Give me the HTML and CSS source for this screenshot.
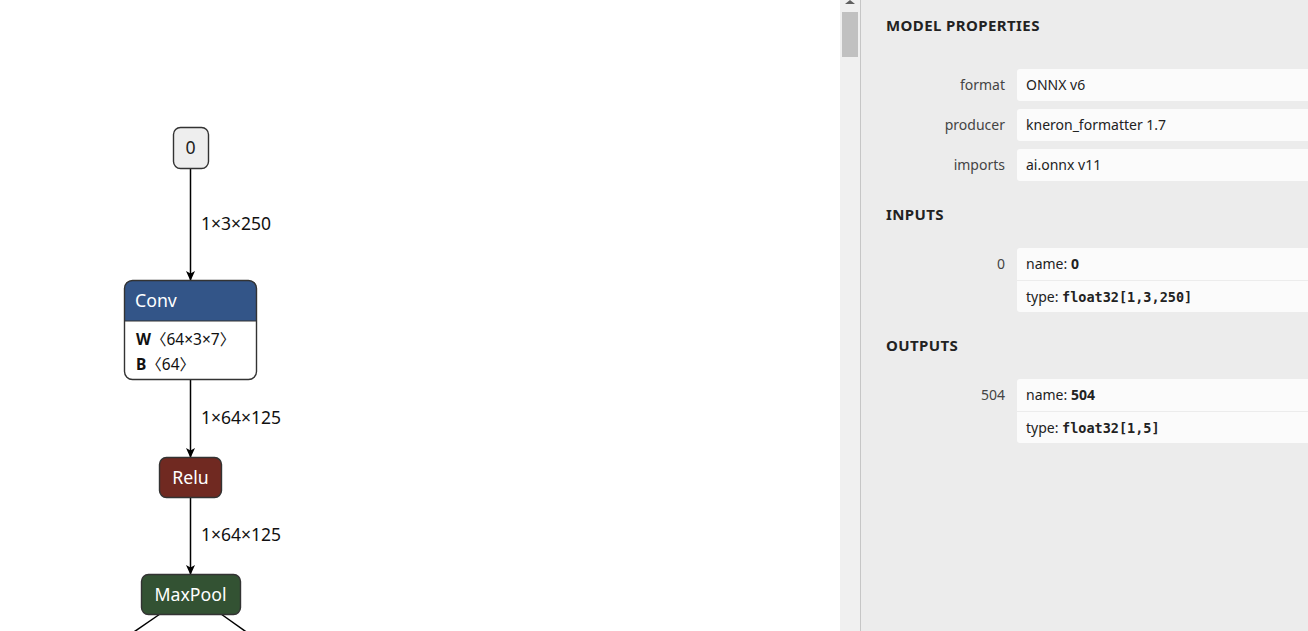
FILE: index.html
```html
<!DOCTYPE html>
<html lang="en">
<head>
    <meta charset="UTF-8">
    <title>Netron - model properties</title>
    <link rel="stylesheet" href="styles.css">
</head>
<body>
    <div class="graph">
        <svg class="graph-canvas" width="840" height="631" viewBox="0 0 840 631">
            <defs>
                <marker id="arrow" viewBox="0 0 10 10" refX="9" refY="5" markerWidth="10" markerHeight="10" orient="auto" markerUnits="userSpaceOnUse">
                    <path d="M0,0.5 L10,5 L0,9.5 L2.5,5 Z" fill="#000"/>
                </marker>
            </defs>

            <!-- edges -->
            <line class="edge" x1="190.5" y1="168" x2="190.5" y2="280" marker-end="url(#arrow)"/>
            <line class="edge" x1="190.5" y1="380" x2="190.5" y2="457" marker-end="url(#arrow)"/>
            <line class="edge" x1="190.5" y1="497" x2="190.5" y2="574" marker-end="url(#arrow)"/>
            <line class="edge" x1="160" y1="614" x2="128" y2="636"/>
            <line class="edge" x1="221" y1="614" x2="252" y2="636"/>

            <text class="edge-label" x="201" y="230">1×3×250</text>
            <text class="edge-label" x="201" y="424">1×64×125</text>
            <text class="edge-label" x="201" y="541">1×64×125</text>

            <!-- input node -->
            <rect class="node input" x="173.5" y="127.5" width="35" height="41" rx="7"/>
            <text class="node-text dark" x="190.5" y="154" text-anchor="middle">0</text>

            <!-- Conv -->
            <path class="conv" d="M124.5,321 V288.5 Q124.5,280.5 132.5,280.5 H248.5 Q256.5,280.5 256.5,288.5 V321 Z"/>
            <rect class="node" x="124.5" y="280.5" width="132" height="99" rx="8" fill="none"/>
            <line class="divider" x1="124.5" y1="321" x2="256.5" y2="321"/>
            <text class="node-text" x="135" y="307">Conv</text>
            <text class="attr" x="136" y="345"><tspan class="attr-name">W</tspan><tspan class="attr-shape">〈64×3×7〉</tspan></text>
            <text class="attr" x="136" y="370"><tspan class="attr-name">B</tspan><tspan class="attr-shape">〈64〉</tspan></text>

            <!-- Relu -->
            <rect class="node relu" x="159.5" y="457.5" width="62" height="40" rx="7"/>
            <text class="node-text" x="190.5" y="484" text-anchor="middle">Relu</text>

            <!-- MaxPool -->
            <rect class="node pool" x="141.5" y="574.5" width="99" height="40" rx="7"/>
            <text class="node-text" x="190.5" y="601" text-anchor="middle">MaxPool</text>
        </svg>
        <div class="scrollbar">
            <div class="scroll-up"></div>
            <div class="scroll-thumb"></div>
        </div>
    </div>

    <div class="sidebar">
        <div class="section-title first">MODEL PROPERTIES</div>
        <div class="prop">
            <div class="prop-name">format</div>
            <div class="prop-value"><div class="value-line">ONNX v6</div></div>
        </div>
        <div class="prop">
            <div class="prop-name">producer</div>
            <div class="prop-value"><div class="value-line">kneron_formatter 1.7</div></div>
        </div>
        <div class="prop">
            <div class="prop-name">imports</div>
            <div class="prop-value"><div class="value-line">ai.onnx v11</div></div>
        </div>

        <div class="section-title">INPUTS</div>
        <div class="prop">
            <div class="prop-name">0</div>
            <div class="prop-value">
                <div class="value-line">name: <b>0</b></div>
                <div class="value-line">type: <code>float32[1,3,250]</code></div>
            </div>
        </div>

        <div class="section-title">OUTPUTS</div>
        <div class="prop">
            <div class="prop-name">504</div>
            <div class="prop-value">
                <div class="value-line">name: <b>504</b></div>
                <div class="value-line">type: <code>float32[1,5]</code></div>
            </div>
        </div>
    </div>
</body>
</html>
```

FILE: styles.css
```css
body {
    margin: 0;
    display: flex;
    height: 631px;
    overflow: hidden;
    font-family: "Noto Sans", "Open Sans", sans-serif;
    background-color: #fff;
}
.graph {
    display: flex;
    width: 860px;
    flex-shrink: 0;
}
.graph-canvas {
    display: block;
}
.edge {
    stroke: #000;
    stroke-width: 1.5;
}
.edge-label {
    font-size: 17.5px;
    fill: #111;
}
.node {
    stroke: #333;
    stroke-width: 1.4;
}
.input {
    fill: #eee;
}
.conv {
    fill: #335588;
}
.relu {
    fill: #702921;
}
.pool {
    fill: #335233;
}
.divider {
    stroke: #333;
    stroke-width: 1.2;
}
.node-text {
    font-size: 17.7px;
    fill: #fff;
}
.node-text.dark {
    fill: #222;
}
.attr {
    font-size: 15.5px;
    fill: #111;
    font-family: "Noto Sans", "Noto Sans CJK SC", sans-serif;
}
.attr-name {
    font-weight: bold;
}
.scrollbar {
    width: 20px;
    background-color: #f0f0f0;
}
.scroll-up {
    width: 0;
    height: 0;
    margin: 0 auto;
    border-left: 5px solid transparent;
    border-right: 5px solid transparent;
    border-bottom: 4px solid #606060;
}
.scroll-thumb {
    margin: 8px 0 0 2px;
    width: 16px;
    height: 45px;
    background-color: #c1c1c1;
}
.sidebar {
    flex: 1;
    min-width: 0;
    overflow: hidden;
    background-color: #ececec;
    border-left: 1px solid #c6c6c6;
    padding-left: 25px;
    color: #333;
}
.section-title {
    font-size: 15px;
    font-weight: bold;
    letter-spacing: 0.4px;
    line-height: 20px;
    color: #222;
    margin: 23px 0 24px;
}
.section-title.first {
    margin: 15px 0 34px;
}
.prop {
    display: flex;
    align-items: flex-start;
    margin-bottom: 8px;
    font-size: 14px;
}
.prop-name {
    width: 119px;
    flex-shrink: 0;
    text-align: right;
    line-height: 32px;
    color: #444;
    margin-right: 12px;
}
.prop-value {
    width: 400px;
    flex-shrink: 0;
    background-color: #fbfbfb;
    border-radius: 3px;
    color: #222;
}
.value-line {
    height: 32px;
    line-height: 32px;
    padding-left: 9px;
}
.value-line + .value-line {
    border-top: 1px solid #ececec;
    height: 31px;
    line-height: 31px;
}
.value-line code {
    font-family: "DejaVu Sans Mono", "Liberation Mono", monospace;
    font-weight: bold;
    font-size: 13.5px;
}
```
